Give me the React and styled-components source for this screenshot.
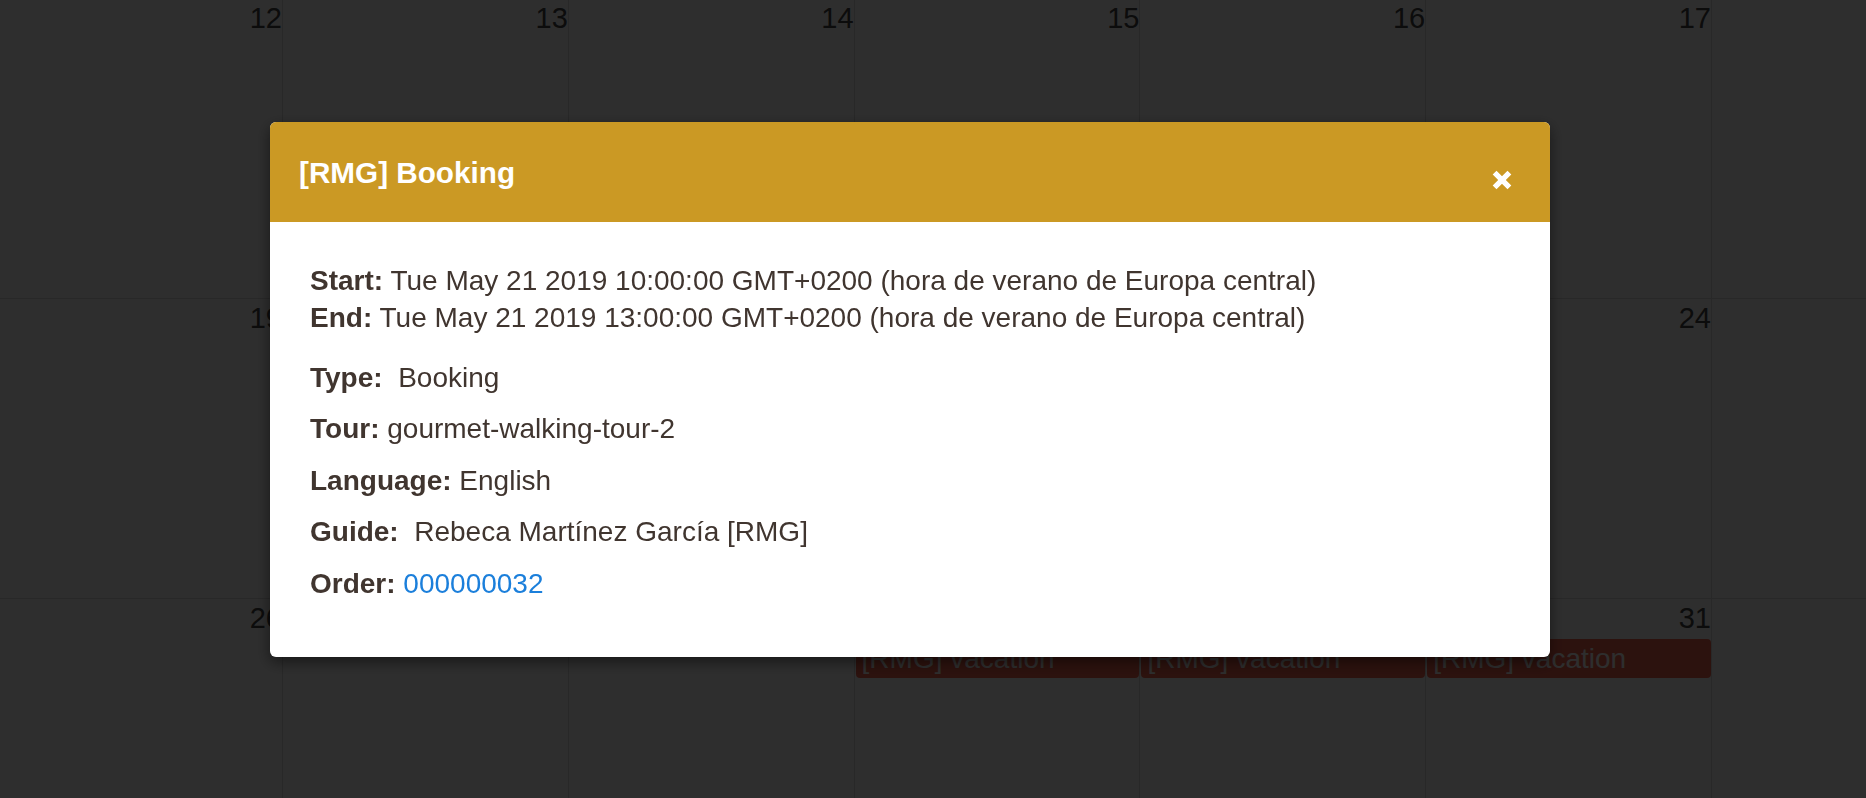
import React from "react";
import styled, { createGlobalStyle } from "styled-components";

const GlobalStyle = createGlobalStyle`
  html, body {
    margin: 0;
    padding: 0;
    overflow: hidden;
    background: #ffffff;
    font-family: "Liberation Sans", Arial, Helvetica, sans-serif;
  }
  * { box-sizing: border-box; }
`;

const Page = styled.div`
  position: relative;
  width: 100vw;
  height: 100vh;
  overflow: hidden;
`;

const Calendar = styled.div`
  display: grid;
  grid-template-columns: repeat(7, 285.8px);
  grid-auto-rows: 300px;
  margin: -1px 0 0 -2.8px;
  width: max-content;
`;

const DayCell = styled.div`
  display: flex;
  flex-direction: column;
  background: #ffffff;
  border-right: 1px solid #dddddd;
  border-bottom: 1px solid #dddddd;
`;

const DayNumber = styled.div`
  text-align: right;
  font-size: 29px;
  line-height: 39.5px;
  color: ${(p) => (p.$other ? "#999999" : "#444444")};
  padding-right: 0;
`;

const Event = styled.div`
  margin: 0 0 0 1px;
  height: 39.5px;
  line-height: 39.5px;
  padding: 0 6px;
  border-radius: 4px;
  background: rgb(244, 100, 78);
  color: #ffffff;
  font-size: 28px;
  white-space: nowrap;
  overflow: hidden;
`;

const Backdrop = styled.div`
  position: fixed;
  inset: 0;
  background: rgba(0, 0, 0, 0.82);
`;

const Modal = styled.div`
  position: fixed;
  left: 270px;
  top: 122px;
  width: 1280px;
  background: #ffffff;
  border-radius: 6px;
  overflow: hidden;
  box-shadow: 0 5px 15px rgba(0, 0, 0, 0.5);
`;

const ModalHeader = styled.div`
  display: flex;
  align-items: center;
  justify-content: space-between;
  height: 100px;
  padding: 2px 38px 0 29px;
  background: #cb9924;
`;

const ModalTitle = styled.h4`
  margin: 0;
  font-size: 29.7px;
  line-height: 1.15;
  font-weight: 700;
  color: #ffffff;
`;

const CloseButton = styled.button`
  display: flex;
  padding: 0;
  margin-top: 13px;
  border: 0;
  background: transparent;
  cursor: pointer;
`;

const ModalBody = styled.div`
  padding: 40px 40px 41px 40px;
  color: #40352f;
  font-size: 28px;
  line-height: 37px;
`;

const DateBlock = styled.div`
  margin-bottom: 22.5px;
`;

const Field = styled.p`
  margin: 0 0 14.6px 0;
`;

const Label = styled.strong`
  font-weight: 700;
`;

const Link = styled.a`
  color: #1b7fdb;
  text-decoration: none;
`;

const rows = [
  [12, 13, 14, 15, 16, 17, 18],
  [19, 20, 21, 22, 23, 24, 25],
  [26, 27, 28, 29, 30, 31, 1],
];

const vacationDays = new Set([29, 30, 31]);

function CloseIcon() {
  return (
    <svg width="20" height="20" viewBox="0 0 20 20" aria-hidden="true">
      <path
        d="M2.6 2.6 L17.4 17.4 M17.4 2.6 L2.6 17.4"
        stroke="#ffffff"
        strokeWidth="5.4"
        strokeLinecap="butt"
        fill="none"
      />
    </svg>
  );
}

export default function App() {
  return (
    <Page>
      <GlobalStyle />
      <Calendar>
        {rows.map((week, ri) =>
          week.map((d, ci) => {
            const other = ri === 2 && ci === 6;
            return (
              <DayCell key={`${ri}-${ci}`}>
                <DayNumber $other={other}>{d}</DayNumber>
                {ri === 2 && vacationDays.has(d) && !other && (
                  <Event>[RMG] vacation</Event>
                )}
              </DayCell>
            );
          })
        )}
      </Calendar>
      <Backdrop />
      <Modal role="dialog">
        <ModalHeader>
          <ModalTitle>[RMG] Booking</ModalTitle>
          <CloseButton aria-label="Close">
            <CloseIcon />
          </CloseButton>
        </ModalHeader>
        <ModalBody>
          <DateBlock>
            <div>
              <Label>Start:</Label> Tue May 21 2019 10:00:00 GMT+0200 (hora de
              verano de Europa central)
            </div>
            <div>
              <Label>End:</Label> Tue May 21 2019 13:00:00 GMT+0200 (hora de
              verano de Europa central)
            </div>
          </DateBlock>
          <Field>
            <Label>Type:</Label>&nbsp; Booking
          </Field>
          <Field>
            <Label>Tour:</Label> gourmet-walking-tour-2
          </Field>
          <Field>
            <Label>Language:</Label> English
          </Field>
          <Field>
            <Label>Guide:</Label>&nbsp; Rebeca Martínez García [RMG]
          </Field>
          <Field>
            <Label>Order:</Label> <Link href="#">000000032</Link>
          </Field>
        </ModalBody>
      </Modal>
    </Page>
  );
}
